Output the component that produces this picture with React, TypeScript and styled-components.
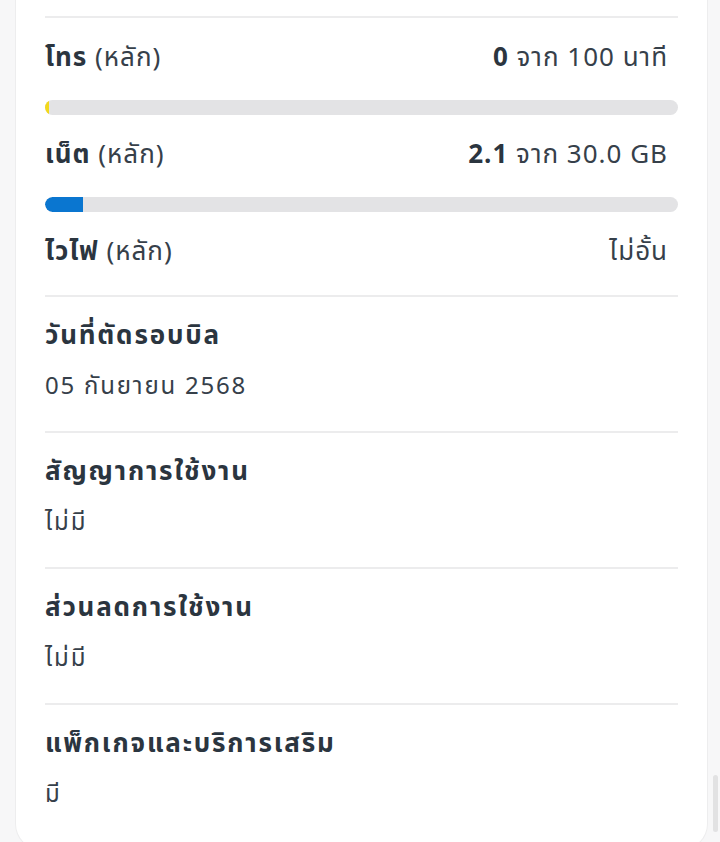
import React from "react";
import styled, { createGlobalStyle } from "styled-components";

const Global = createGlobalStyle`
  html, body {
    margin: 0;
    padding: 0;
    background: #f7f7f8;
    overflow: hidden;
  }
  body {
    font-family: "Noto Sans Thai", "Noto Sans", "Open Sans", sans-serif;
    color: #2e3842;
  }
`;

const Page = styled.div`
  position: relative;
  height: 842px;
  overflow: hidden;
`;

const Card = styled.div`
  margin-left: 15px;
  width: 693px;
  box-sizing: border-box;
  height: 850px;
  background: #ffffff;
  border: 1px solid #ededee;
  border-top: none;
  border-radius: 0 0 26px 26px;
  padding: 16px 29px 0 29px;
`;

const Divider = styled.div`
  height: 2px;
  background: #ececed;
`;

const Usage = styled.div`
  padding-top: 20px;
  padding-bottom: 23px;
`;

const Line = styled.div`
  display: flex;
  justify-content: space-between;
  align-items: center;
  height: 40px;
  padding-right: 10px;
  font-size: 26px;
  line-height: 40px;
  letter-spacing: 1px;
`;

const Strong = styled.span`
  font-weight: 700;
  color: #2b353f;
`;

const Muted = styled.span`
  font-weight: 400;
  color: #36404a;
`;

const Track = styled.div`
  margin: 22px 0 20px;
  height: 15px;
  border-radius: 8px;
  background: #e3e3e5;
  overflow: hidden;
`;

const Fill = styled.div<{ $color: string }>`
  height: 100%;
  background: ${(p) => p.$color};
  border-radius: 8px 0 0 8px;
`;

const Section = styled.div<{ $last?: boolean }>`
  padding: 19px 0 ${(p) => (p.$last ? "0" : "24px")};
`;

const Title = styled.div`
  height: 40px;
  line-height: 40px;
  font-size: 26px;
  letter-spacing: 1.8px;
  font-weight: 700;
  color: #2b353f;
`;

const Value = styled.div`
  margin-top: 11px;
  height: 40px;
  line-height: 40px;
  font-size: 24px;
  letter-spacing: 1.8px;
  font-weight: 400;
  color: #36404a;
`;

const Scrollbar = styled.div`
  position: absolute;
  right: 2px;
  top: 775px;
  width: 5px;
  height: 57px;
  border-radius: 3px;
  background: #e2e2e3;
`;

const usage = [
  { label: "โทร", used: 0, total: "100", unit: "นาที", pct: 0.6, color: "#f2d81c" },
  { label: "เน็ต", used: 2.1, total: "30.0", unit: "GB", pct: 6, color: "#0a76d0" },
];

const sections = [
  { title: "วันที่ตัดรอบบิล", value: "05 กันยายน 2568" },
  { title: "สัญญาการใช้งาน", value: "ไม่มี" },
  { title: "ส่วนลดการใช้งาน", value: "ไม่มี" },
  { title: "แพ็กเกจและบริการเสริม", value: "มี" },
];

export default function App() {
  return (
    <Page>
      <Global />
      <Card>
        <Divider />
        <Usage>
          {usage.map((u) => (
            <React.Fragment key={u.label}>
              <Line>
                <span>
                  <Strong>{u.label}</Strong> <Muted>(หลัก)</Muted>
                </span>
                <span>
                  <Strong>{u.used}</Strong> <Muted>จาก {u.total} {u.unit}</Muted>
                </span>
              </Line>
              <Track>
                <Fill $color={u.color} style={{ width: `${u.pct}%` }} />
              </Track>
            </React.Fragment>
          ))}
          <Line>
            <span>
              <Strong>ไวไฟ</Strong> <Muted>(หลัก)</Muted>
            </span>
            <Muted>ไม่อั้น</Muted>
          </Line>
        </Usage>
        {sections.map((s, i) => (
          <React.Fragment key={s.title}>
            <Divider />
            <Section $last={i === sections.length - 1}>
              <Title>{s.title}</Title>
              <Value>{s.value}</Value>
            </Section>
          </React.Fragment>
        ))}
      </Card>
      <Scrollbar />
    </Page>
  );
}
